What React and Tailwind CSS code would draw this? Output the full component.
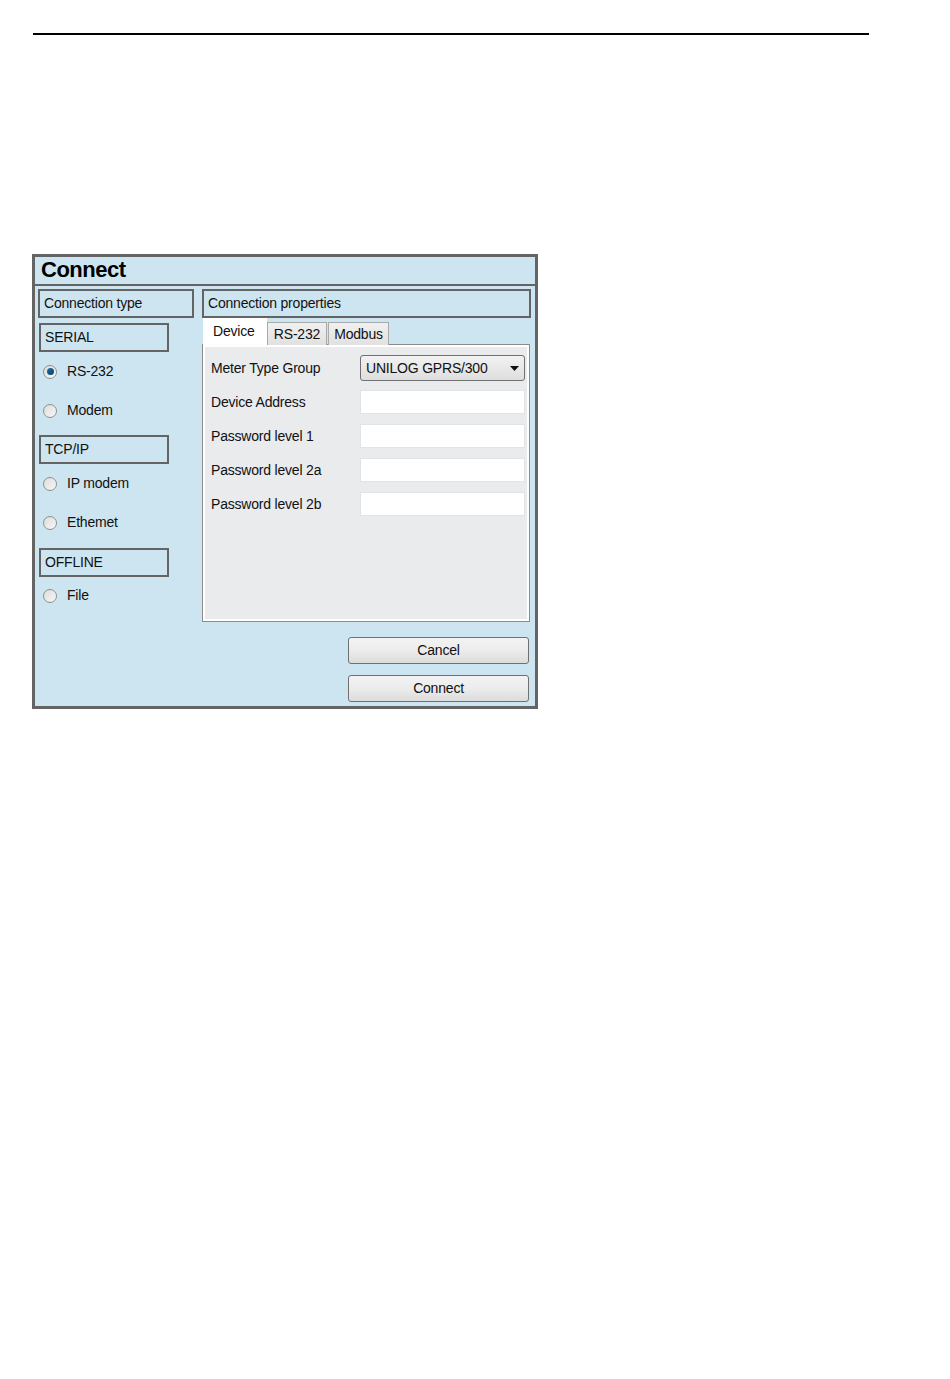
import React from 'react';

const font = { fontFamily: '"Liberation Sans", Arial, sans-serif' };

function GroupLabel({ children, className = '' }) {
  return (
    <div className={`h-[29px] border-2 border-[#646464] flex items-center pl-[4px] ${className}`}>
      {children}
    </div>
  );
}

function Radio({ label, checked }) {
  return (
    <div className="h-[39px] flex items-center pl-[5px]">
      <span className="w-[14px] h-[14px] rounded-full border border-[#8e8f8f] bg-gradient-to-br from-[#dcdcdc] to-[#f8f8f8] flex items-center justify-center">
        {checked && <span className="w-[7px] h-[7px] rounded-full bg-gradient-to-br from-[#1a6fa8] to-[#0d3f6b]" />}
      </span>
      <span className="ml-[10px]">{label}</span>
    </div>
  );
}

function Field({ label, children }) {
  return (
    <div className="h-[34px] flex items-center">
      <span className="w-[149px]">{label}</span>
      {children}
    </div>
  );
}

function TextBox() {
  return <div className="w-[165px] h-[24px] bg-white border border-[#e2e3e4]" />;
}

function Button({ children }) {
  return (
    <button className="w-[181px] h-[27px] rounded-[3px] border border-[#707070] bg-gradient-to-b from-[#f3f3f3] via-[#ececec] to-[#dcdcdc] text-[14px] text-[#111]">
      {children}
    </button>
  );
}

export default function App() {
  return (
    <div className="min-h-[1379px] bg-white pt-[33px] text-[14px] tracking-[-0.2px] text-[#111]" style={font}>
      <div className="ml-[33px] w-[836px] h-[2px] bg-black" />

      <div className="ml-[32px] mt-[219px] w-[506px] h-[455px] border-[3px] border-[#646464] bg-[#cde5f0] flex flex-col">
        <div className="h-[29px] border-b-2 border-[#646464] flex items-center pl-[6px] pb-[2px] text-[22px] font-bold tracking-[-0.5px] text-black">
          Connect
        </div>

        <div className="flex pl-[3px] pt-[3px] gap-[8px]">
          {/* left column */}
          <div className="w-[156px] flex flex-col">
            <GroupLabel className="h-[28px]">Connection type</GroupLabel>
            <GroupLabel className="mt-[5px] w-[130px] ml-[1px]">SERIAL</GroupLabel>
            <Radio label="RS-232" checked />
            <Radio label="Modem" />
            <GroupLabel className="mt-[5px] w-[130px] ml-[1px]">TCP/IP</GroupLabel>
            <Radio label="IP modem" />
            <Radio label="Ethemet" />
            <GroupLabel className="mt-[6px] w-[130px] ml-[1px]">OFFLINE</GroupLabel>
            <div className="-mt-[1px]">
              <Radio label="File" />
            </div>
          </div>

          {/* right column */}
          <div className="w-[329px] flex flex-col">
            <GroupLabel>Connection properties</GroupLabel>

            <div className="flex items-end h-[27px] pl-[1px] relative z-10">
              <div className="w-[64px] h-[27px] bg-white pl-[10px] pt-[3px]">Device</div>
              <div className="w-[60px] h-[23px] border border-[#a9a9a9] border-b-0 bg-gradient-to-b from-[#f0f0f0] to-[#e1e1e1] flex items-center justify-center">RS-232</div>
              <div className="ml-[1px] w-[61px] h-[23px] border border-[#a9a9a9] border-b-0 bg-gradient-to-b from-[#f0f0f0] to-[#e1e1e1] flex items-center justify-center">Modbus</div>
            </div>

            <div className="-mt-[1px] w-[328px] h-[278px] border border-[#8c8c8c] bg-white p-[2px]">
              <div className="h-full bg-[#e9ebed] pl-[6px] pt-[4px]">
                <Field label="Meter Type Group">
                  <div className="w-[165px] h-[26px] rounded-[3px] border border-[#707070] bg-gradient-to-b from-[#f2f2f2] to-[#dedede] flex items-center justify-between pl-[5px] pr-[5px]">
                    <span>UNILOG GPRS/300</span>
                    <svg width="9" height="5" viewBox="0 0 9 5"><path d="M0 0h9L4.5 5z" fill="#111" /></svg>
                  </div>
                </Field>
                <Field label="Device Address"><TextBox /></Field>
                <Field label="Password level 1"><TextBox /></Field>
                <Field label="Password level 2a"><TextBox /></Field>
                <Field label="Password level 2b"><TextBox /></Field>
              </div>
            </div>

            <div className="flex flex-col items-end gap-[11px] mt-[15px] pr-[2px]">
              <Button>Cancel</Button>
              <Button>Connect</Button>
            </div>
          </div>
        </div>
      </div>
    </div>
  );
}
